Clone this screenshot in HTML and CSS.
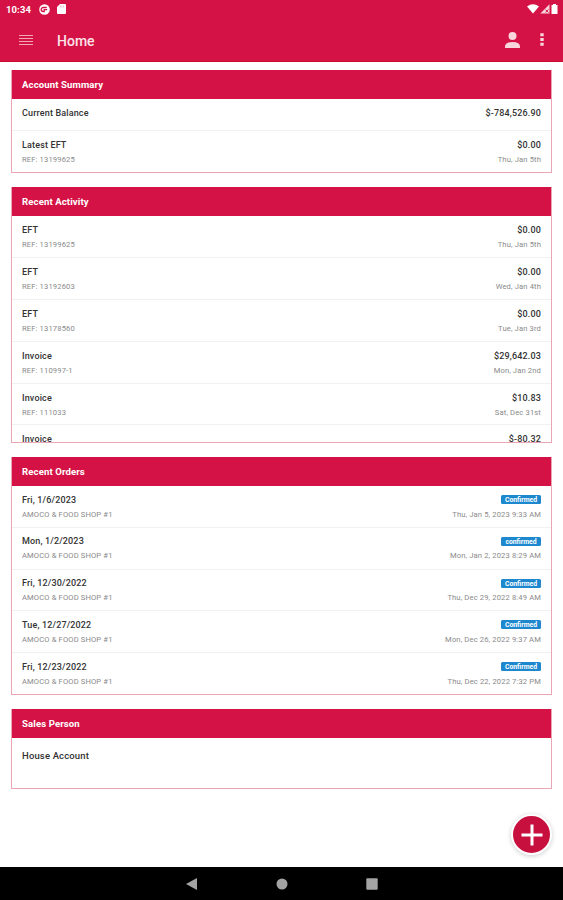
FILE: index.html
```
<!DOCTYPE html>
<html>
<head>
    <title>Home</title>
    <meta charset="utf-8"/>
    <link rel="stylesheet" href="styles.css">
</head>
<body>
    <div class="top">
        <div class="status">
            <span class="time">10:34</span>
            <svg class="st-round" width="11" height="11" viewBox="0 0 11 11"><circle cx="5.5" cy="5.5" r="5.3" fill="#fff"/><path d="M7.8 3.5H4.2a2 2 0 0 0 0 4h1V5.6h3" fill="none" stroke="#d41245" stroke-width="1.3"/></svg>
            <svg class="st-card" width="9" height="10" viewBox="0 0 9 10"><path d="M3 0h5q1 0 1 1v8q0 1-1 1H1q-1 0-1-1V3z" fill="#fff"/><path d="M3.3 1.5v2M5 1.5v2M6.7 1.5v2" stroke="#ef9bb0" stroke-width=".7"/></svg>
            <div class="st-right">
                <svg width="12" height="10" viewBox="0 0 12 10"><path d="M0 2.6Q6-2 12 2.6L6 9.6z" fill="#fff"/></svg>
                <svg width="10" height="10" viewBox="0 0 10 10"><path d="M9.5.3v9.2H.3z" fill="#f9d3dc"/><path d="M5.5 5.5l3 3m0-3l-3 3" stroke="#d41245" stroke-width=".9"/></svg>
                <svg width="7" height="10" viewBox="0 0 7 10"><path d="M2 0h3v1h1.5v9H.5V1H2z" fill="#fff"/></svg>
            </div>
        </div>
        <div class="toolbar">
            <svg class="menu" width="14" height="12" viewBox="0 0 14 12"><path d="M0 1.5h14M0 4.5h14M0 7.5h14M0 10.5h14" stroke="#f3a5b8"/></svg>
            <h1>Home</h1>
            <svg class="user" width="15" height="16" viewBox="0 0 15 16"><circle cx="7.5" cy="4" r="4" fill="#fad5de"/><path d="M0 16v-1.5Q0 10 7.500 10t7.500 4.500V16z" fill="#fad5de"/></svg>
            <svg class="more" width="4" height="13" viewBox="0 0 4 13"><path d="M.3.300h3.400v3H.3zM.3 5h3.400v3H.3zM.3 9.700h3.400v3H.3z" fill="#fad5de"/></svg>
        </div>
    </div>

    <div class="content">
        <div class="card summary">
            <h2>Account Summary</h2>
            <div class="row single"><div class="line"><b>Current Balance</b><b class="bal">$-784,526.90</b></div></div>
            <div class="row"><div class="line"><b>Latest EFT</b><b>$0.00</b></div><div class="sub"><span>REF: 13199625</span><span>Thu, Jan 5th</span></div></div>
        </div>

        <div class="card activity">
            <h2>Recent Activity</h2>
            <div class="row"><div class="line"><b>EFT</b><b>$0.00</b></div><div class="sub"><span>REF: 13199625</span><span>Thu, Jan 5th</span></div></div>
            <div class="row"><div class="line"><b>EFT</b><b>$0.00</b></div><div class="sub"><span>REF: 13192603</span><span>Wed, Jan 4th</span></div></div>
            <div class="row"><div class="line"><b>EFT</b><b>$0.00</b></div><div class="sub"><span>REF: 13178560</span><span>Tue, Jan 3rd</span></div></div>
            <div class="row"><div class="line"><b>Invoice</b><b>$29,642.03</b></div><div class="sub"><span>REF: 110997-1</span><span>Mon, Jan 2nd</span></div></div>
            <div class="row"><div class="line"><b>Invoice</b><b>$10.83</b></div><div class="sub"><span>REF: 111033</span><span>Sat, Dec 31st</span></div></div>
            <div class="row"><div class="line"><b>Invoice</b><b>$-80.32</b></div></div>
        </div>

        <div class="card orders">
            <h2>Recent Orders</h2>
            <div class="row"><div class="line"><b>Fri, 1/6/2023</b><span class="badge">Confirmed</span></div><div class="sub"><span>AMOCO &amp; FOOD SHOP #1</span><span>Thu, Jan 5, 2023 9:33 AM</span></div></div>
            <div class="row"><div class="line"><b>Mon, 1/2/2023</b><span class="badge">confirmed</span></div><div class="sub"><span>AMOCO &amp; FOOD SHOP #1</span><span>Mon, Jan 2, 2023 8:29 AM</span></div></div>
            <div class="row"><div class="line"><b>Fri, 12/30/2022</b><span class="badge">Confirmed</span></div><div class="sub"><span>AMOCO &amp; FOOD SHOP #1</span><span>Thu, Dec 29, 2022 8:49 AM</span></div></div>
            <div class="row"><div class="line"><b>Tue, 12/27/2022</b><span class="badge">Confirmed</span></div><div class="sub"><span>AMOCO &amp; FOOD SHOP #1</span><span>Mon, Dec 26, 2022 9:37 AM</span></div></div>
            <div class="row"><div class="line"><b>Fri, 12/23/2022</b><span class="badge">Confirmed</span></div><div class="sub"><span>AMOCO &amp; FOOD SHOP #1</span><span>Thu, Dec 22, 2022 7:32 PM</span></div></div>
        </div>

        <div class="card sales">
            <h2>Sales Person</h2>
            <div class="row"><div class="line"><b>House Account</b></div></div>
        </div>
    </div>

    <div class="fab">
        <svg width="22" height="22" viewBox="0 0 22 22"><path d="M11 .5v21M.5 11h21" stroke="#fff" stroke-width="3"/></svg>
    </div>

    <div class="navbar">
        <svg width="12" height="14" viewBox="0 0 12 14"><path d="M11 1v12L0 7z" fill="#a3a3a3"/></svg>
        <svg width="12" height="12" viewBox="0 0 12 12"><circle cx="6" cy="6" r="5.500" fill="#a3a3a3"/></svg>
        <svg width="12" height="12" viewBox="0 0 12 12"><rect x=".3" y=".3" width="11.400" height="11.400" rx="1" fill="#a3a3a3"/></svg>
    </div>
</body>
</html>
```
FILE: styles.css
```
* {
  box-sizing: border-box;
}
body {
  margin: 0;
  height: 900px;
  display: flex;
  flex-direction: column;
  overflow: hidden;
  background: #fff;
  font-family: Roboto, sans-serif;
}
svg {
  display: block;
  flex: none;
}
.top {
  height: 62px;
  background: #d41245;
  border-bottom: 1px solid #cc0c2c;
  color: #fff;
}
.status {
  height: 18px;
  padding: 0 5px 0 6px;
  display: flex;
  align-items: center;
}
.time {
  font-size: 9.5px;
  font-weight: 700;
  width: 33px;
  letter-spacing: 0.1px;
}
.st-card {
  margin-left: 7px;
}
.st-right {
  margin-left: auto;
  display: flex;
  gap: 1px;
}
.toolbar {
  height: 43px;
  padding: 0 19px;
  display: flex;
  align-items: center;
}
.toolbar h1 {
  margin: 2px auto 0 24px;
  font-size: 14px;
  font-weight: 500;
  line-height: 18px;
  color: #fde3e9;
}
.more {
  margin-left: 20px;
}
.content {
  flex: 1;
  padding: 8px 11px 0;
}
.card {
  border: 1px solid #eba6b6;
  border-top: none;
  margin-bottom: 14px;
  overflow: hidden;
}
.card h2 {
  margin: 0 -1px;
  height: 29px;
  padding-left: 11px;
  background: #d41245;
  color: #fff;
  font-size: 9.6px;
  font-weight: 700;
  letter-spacing: 0.1px;
  line-height: 29px;
}
.summary { height: 103px; }
.activity { height: 256px; }
.orders { height: 238px; }
.sales { height: 80px; }
.row {
  height: 41.9px;
  padding: 8px 10px 0;
  border-bottom: 1px solid #f1f1f1;
}
.orders .row {
  height: 41.8px;
  padding-top: 7.5px;
}
.row:last-child {
  border-bottom: none;
}
.row.single {
  height: 32px;
}
.line, .sub {
  display: flex;
  justify-content: space-between;
  align-items: center;
}
.line {
  height: 12px;
  font-size: 9px;
  color: #333;
}
.line b {
  font-weight: 500;
  letter-spacing: 0.15px;
}
.sub {
  height: 10px;
  margin-top: 3.5px;
  font-size: 7.6px;
  letter-spacing: 0.14px;
  color: #8a8a8a;
}
.badge {
  width: 40px;
  height: 9px;
  border-radius: 1.5px;
  background: #1e88cf;
  color: #fff;
  font-size: 6.8px;
  font-weight: 700;
  line-height: 10px;
  text-align: center;
}
.sales .row {
  padding-top: 11.5px;
}
.sales .line {
  font-size: 9.5px;
}
/* floats over the list */
.fab {
  position: absolute;
  right: 11px;
  bottom: 45px;
  width: 41px;
  height: 41px;
  border: 2px solid #fff;
  border-radius: 50%;
  background: #c8103f;
  box-shadow: 0 1px 5px rgba(0, 0, 0, 0.2);
  display: flex;
  align-items: center;
  justify-content: center;
}
.navbar {
  height: 33px;
  background: #000;
  display: flex;
  align-items: center;
  justify-content: center;
  gap: 78px;
}
```
